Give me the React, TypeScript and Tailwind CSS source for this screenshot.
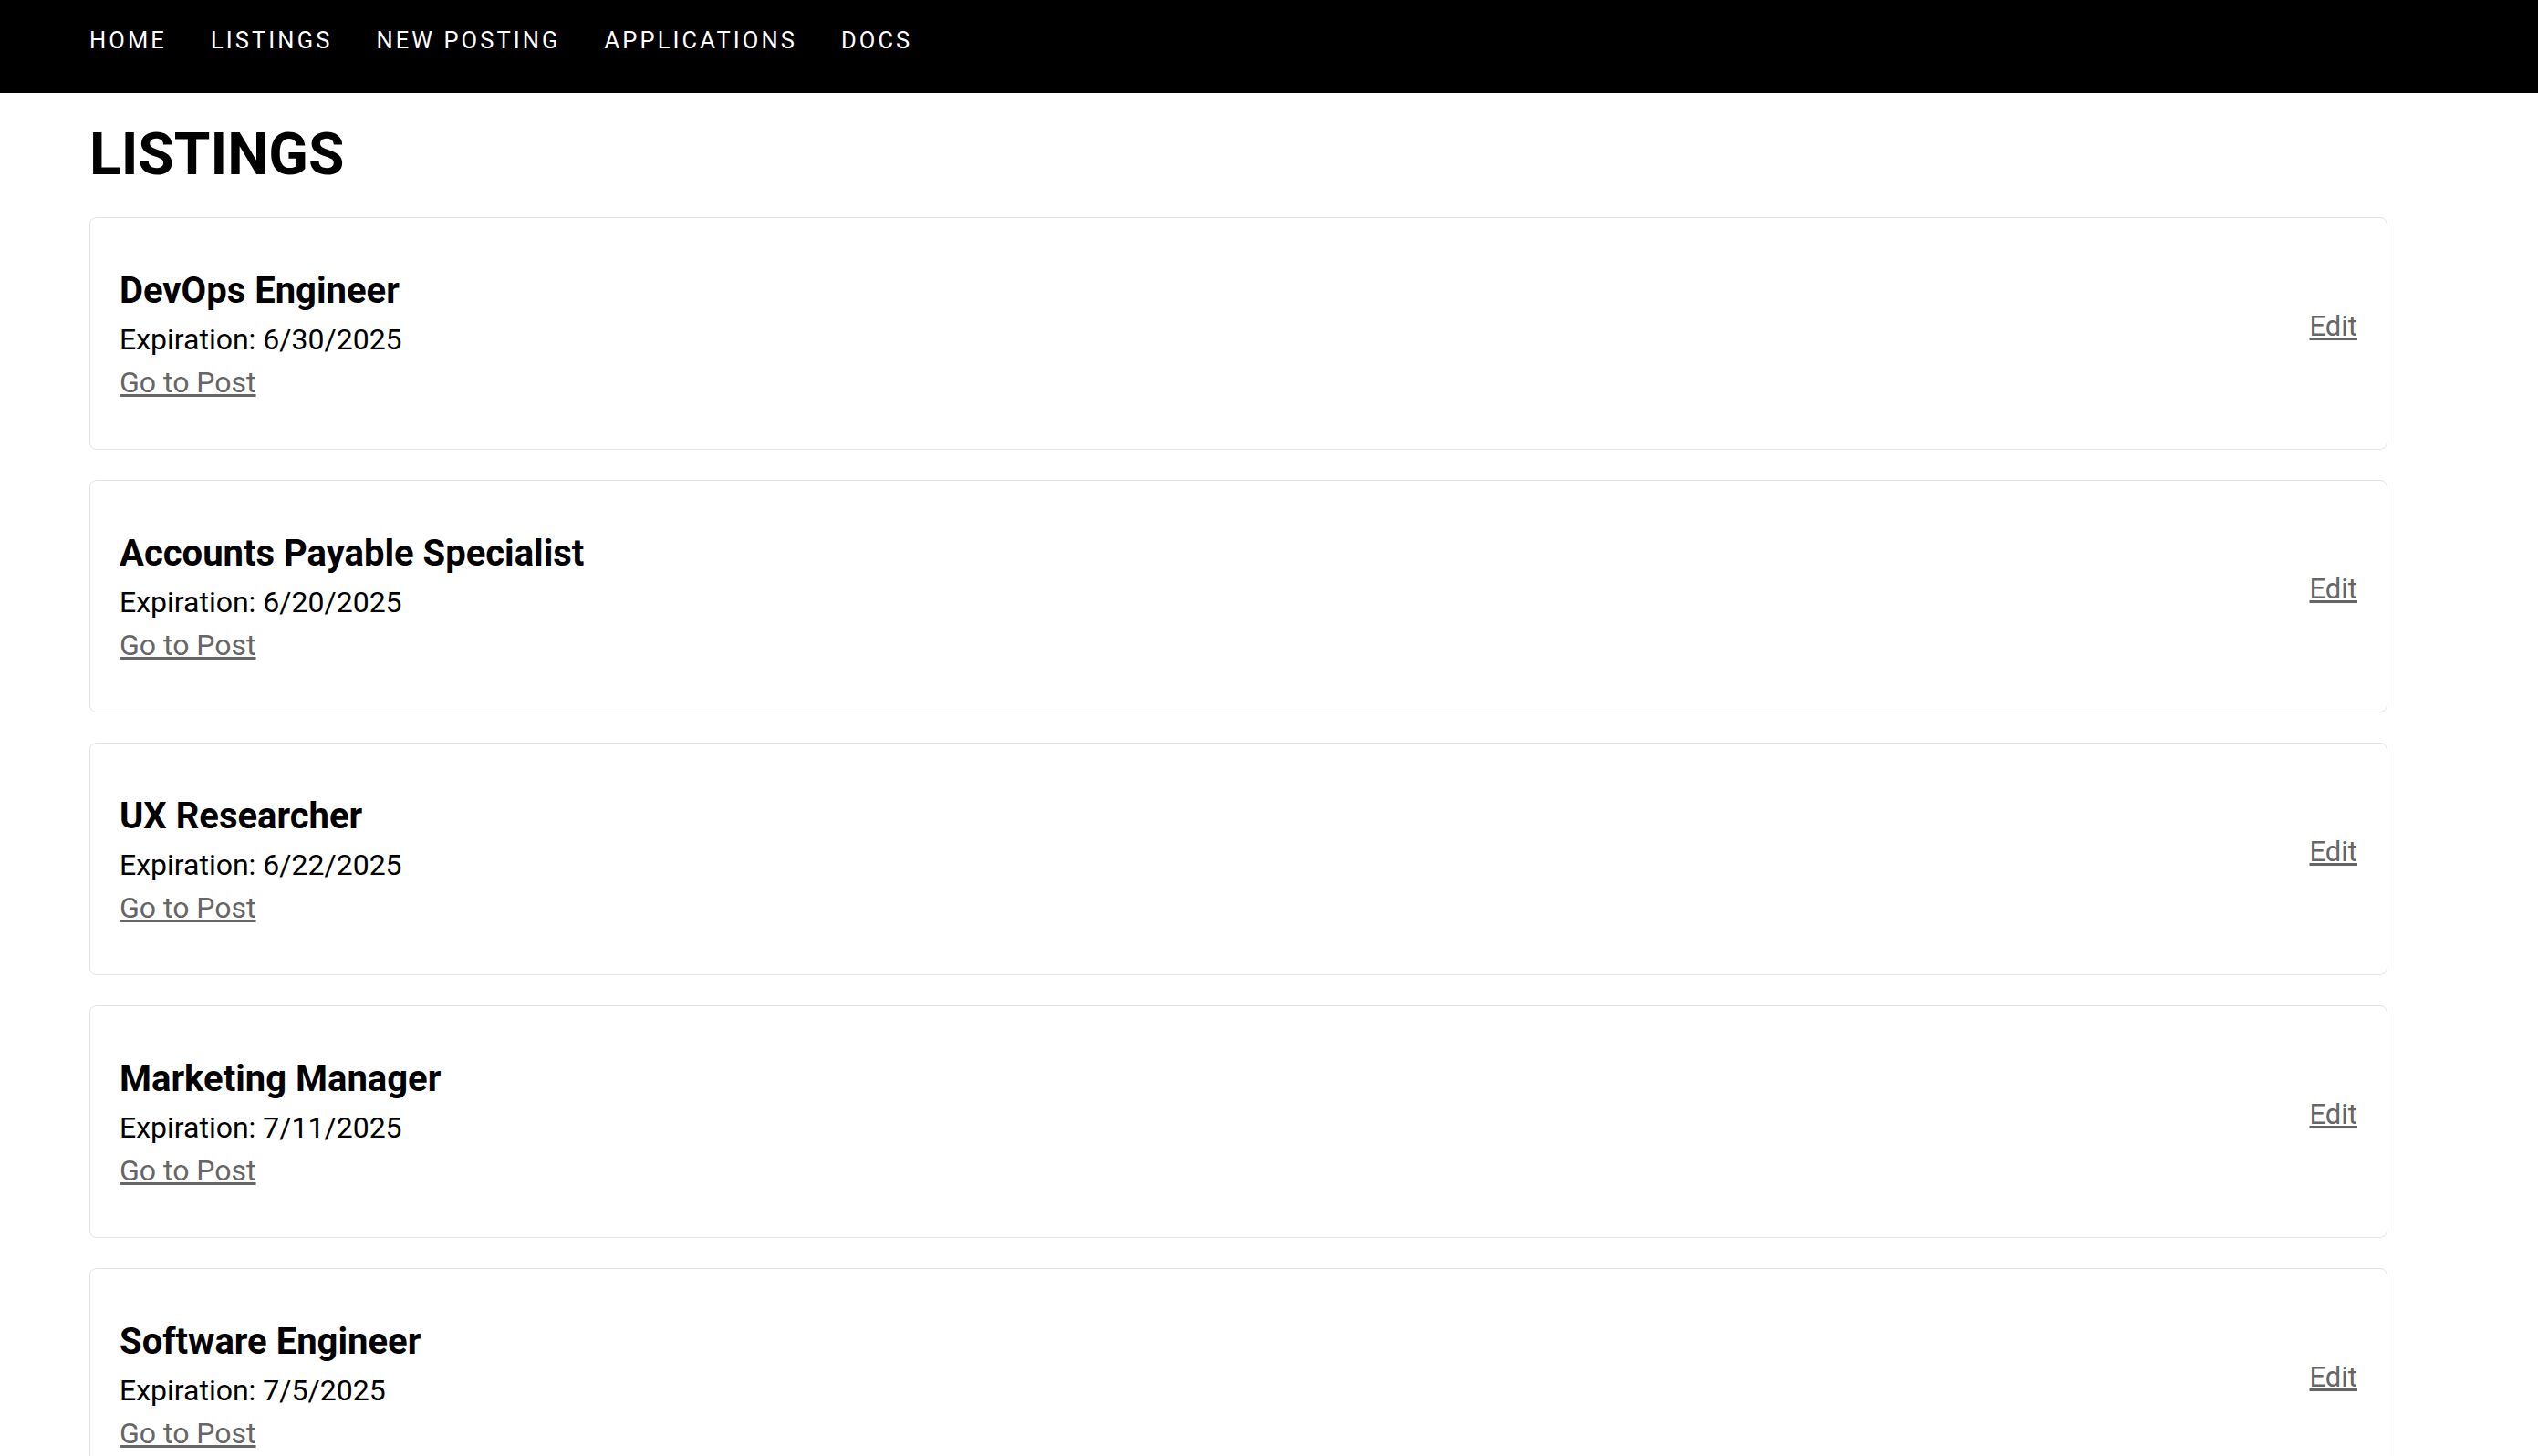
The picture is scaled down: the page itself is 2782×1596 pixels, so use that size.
import React from 'react'

type Listing = {
  id: number
  title: string
  expiration: string
}

const navItems = ['HOME', 'LISTINGS', 'NEW POSTING', 'APPLICATIONS', 'DOCS']

const listings: Listing[] = [
  { id: 1, title: 'DevOps Engineer', expiration: '6/30/2025' },
  { id: 2, title: 'Accounts Payable Specialist', expiration: '6/20/2025' },
  { id: 3, title: 'UX Researcher', expiration: '6/22/2025' },
  { id: 4, title: 'Marketing Manager', expiration: '7/11/2025' },
  { id: 5, title: 'Software Engineer', expiration: '7/5/2025' },
  { id: 6, title: 'Product Designer', expiration: '7/18/2025' },
]

function NavBar() {
  return (
    <nav className="h-[102px] bg-black px-[98px] pt-[26px]">
      <ul className="flex gap-[48px]">
        {navItems.map((item) => (
          <li key={item}>
            <a
              href="#"
              className="text-[25.5px] leading-[36px] tracking-[3.1px] text-white"
            >
              {item}
            </a>
          </li>
        ))}
      </ul>
    </nav>
  )
}

function ListingCard({ listing }: { listing: Listing }) {
  return (
    <div className="flex w-[2519px] items-center justify-between rounded-[8px] border border-[#e4e4e7] bg-white pt-[50px] pb-[49px] px-[32px]">
      <div className="flex flex-col">
        <h3 className="text-[40px] font-bold leading-[60px] text-black">{listing.title}</h3>
        <p className="text-[32px] leading-[47px] text-black">Expiration: {listing.expiration}</p>
        <a
          href="#"
          className="self-start text-[32px] leading-[47px] text-[#666666] underline decoration-[3px] underline-offset-[2px]"
        >
          Go to Post
        </a>
      </div>
      <a
        href="#"
        className="mb-[18px] text-[31px] leading-[47px] text-[#666666] underline decoration-[3px] underline-offset-[2px]"
      >
        Edit
      </a>
    </div>
  )
}

export default function App() {
  return (
    <div className="min-h-screen bg-white font-['Roboto',sans-serif] text-black">
      <NavBar />
      <main className="px-[98px]">
        <h1 className="mt-[28px] mb-[29px] text-[64px] font-bold leading-[79px]">LISTINGS</h1>
        <div className="flex flex-col gap-[33px] pb-[40px]">
          {listings.map((listing) => (
            <ListingCard key={listing.id} listing={listing} />
          ))}
        </div>
      </main>
    </div>
  )
}
